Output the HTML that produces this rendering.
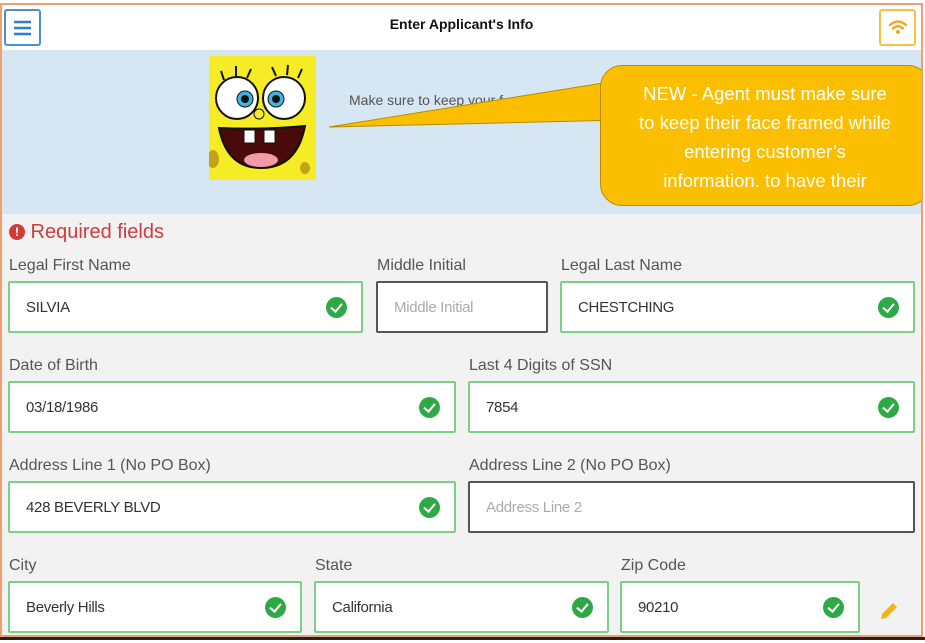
<!DOCTYPE html>
<html><head><meta charset="utf-8"><style>
*{box-sizing:border-box;margin:0;padding:0}
body{width:925px;height:643px;overflow:hidden;background:#fff;font-family:"Liberation Sans",sans-serif;position:relative}
#frame{position:absolute;left:0px;top:3px;width:923px;height:634px;border:2px solid #f0a070;border-bottom:2px solid #e8a070;background:#f2f2f2;overflow:hidden}
#bottomline{position:absolute;left:0;top:637px;width:925px;height:3px;background:#222}
#hdr{position:absolute;left:0;top:0;width:100%;height:45px;background:#fff}
.title{position:absolute;left:0;width:100%;top:11px;text-align:center;font-weight:bold;font-size:14px;color:#111}
.btn{position:absolute;top:4px;width:37px;height:37px;border-radius:3px;background:#fff}
#band{position:absolute;left:0;top:45px;width:100%;height:164px;background:#d6e6f2}
.lbl{position:absolute;font-size:16px;color:#555}
.in{position:absolute;height:52px;background:#fff;border:2px solid #7ccf86;border-radius:2px;font-size:15px;color:#333;padding:16px 0 0 16px;letter-spacing:-0.3px}
.in.e{border-color:#555}
.ph{color:#aaa}
.ck{position:absolute;right:14px;top:14px;width:21px;height:21px;border-radius:50%;background:#2daa46}
.ck:after{content:"";position:absolute;left:7px;top:4px;width:5px;height:9px;border:solid #fff;border-width:0 2px 2px 0;transform:rotate(40deg)}
</style></head><body>
<div id="frame">
<div id="hdr">
 <div class="btn" style="left:2px;border:2px solid #4a90d0"><svg width="33" height="33"><g stroke="#2f7fcf" stroke-width="2.5"><line x1="8" y1="11" x2="25" y2="11"/><line x1="8" y1="17" x2="25" y2="17"/><line x1="8" y1="23" x2="25" y2="23"/></g></svg></div>
 <div class="title">Enter Applicant's Info</div>
 <div class="btn" style="left:877px;border:2px solid #f7c244"><svg width="33" height="33"><g fill="none" stroke="#f2a81d" stroke-width="2.3" stroke-linecap="round"><path d="M9 14 Q17 7 25 14"/><path d="M12 17.5 Q17 13 22 17.5"/></g><circle cx="17" cy="21" r="2" fill="#f2a81d"/></svg></div>
</div>
<div id="band">
 <svg style="position:absolute;left:207px;top:6px" width="107" height="124" viewBox="0 0 107 124">
  <rect width="107" height="124" fill="#f5ec26"/>
  <g stroke="#111" stroke-width="2"><line x1="15" y1="24" x2="12" y2="15"/><line x1="27" y1="20" x2="27" y2="10"/><line x1="38" y1="22" x2="42" y2="13"/><line x1="67" y1="20" x2="63" y2="11"/><line x1="78" y1="19" x2="79" y2="9"/><line x1="89" y1="22" x2="93" y2="13"/></g>
  <circle cx="28" cy="42" r="21" fill="#fff" stroke="#111" stroke-width="2"/><circle cx="75" cy="42" r="21" fill="#fff" stroke="#111" stroke-width="2"/>
  <circle cx="36" cy="43" r="8" fill="#3fb5e0" stroke="#111"/><circle cx="36" cy="43" r="4" fill="#111"/>
  <circle cx="67" cy="43" r="8" fill="#3fb5e0" stroke="#111"/><circle cx="67" cy="43" r="4" fill="#111"/>
  <circle cx="50" cy="58" r="5" fill="#f5ec26" stroke="#111"/>
  <path d="M10 72 Q52 74 96 70 Q88 112 52 112 Q18 112 10 72Z" fill="#4a0a0a" stroke="#111" stroke-width="2"/>
  <rect x="35" y="74" width="11" height="13" fill="#fff" stroke="#111"/><rect x="55" y="74" width="11" height="13" fill="#fff" stroke="#111"/>
  <ellipse cx="52" cy="104" rx="17" ry="7" fill="#f19aa8"/>
  <ellipse cx="4" cy="103" rx="6" ry="9" fill="#c4a21a"/><ellipse cx="96" cy="112" rx="5" ry="6" fill="#c4a21a"/>
 </svg>
 <div style="position:absolute;left:347px;top:42px;font-size:14px;color:#555">Make sure to keep your f</div>
 <svg style="position:absolute;left:320px;top:0" width="300" height="100"><polygon points="7,77 300,30 300,70" fill="#fcbf00" stroke="#b88c00"/></svg>
 <div style="position:absolute;left:598px;top:15px;width:330px;height:141px;background:#fcbf00;border:1.5px solid #b88c00;border-radius:22px;color:#fff;line-height:29px;text-align:center;padding:13px 10px 0 10px;font-family:'Liberation Sans',sans-serif;font-size:18.5px">NEW - Agent must make sure<br>to keep their face framed while<br>entering customer’s<br>information. to have their</div>
</div>
<div style="position:absolute;left:7px;top:216px;font-size:20px;color:#d23b3b"><span style="display:inline-block;width:16px;height:16px;border-radius:50%;background:#d23b3b;color:#fff;font-size:12px;font-weight:bold;text-align:center;line-height:16px;vertical-align:2px">!</span> Required fields</div>

<div class="lbl" style="left:7px;top:252px">Legal First Name</div>
<div class="lbl" style="left:375px;top:252px">Middle Initial</div>
<div class="lbl" style="left:559px;top:252px">Legal Last Name</div>
<div class="in" style="left:6px;top:276px;width:355px">SILVIA<div class="ck"></div></div>
<div class="in e" style="left:374px;top:276px;width:172px"><span class="ph">Middle Initial</span></div>
<div class="in" style="left:558px;top:276px;width:355px">CHESTCHING<div class="ck"></div></div>

<div class="lbl" style="left:7px;top:352px">Date of Birth</div>
<div class="lbl" style="left:467px;top:352px">Last 4 Digits of SSN</div>
<div class="in" style="left:6px;top:376px;width:448px">03/18/1986<div class="ck"></div></div>
<div class="in" style="left:466px;top:376px;width:447px">7854<div class="ck"></div></div>

<div class="lbl" style="left:7px;top:452px">Address Line 1 (No PO Box)</div>
<div class="lbl" style="left:467px;top:452px">Address Line 2 (No PO Box)</div>
<div class="in" style="left:6px;top:476px;width:448px">428 BEVERLY BLVD<div class="ck"></div></div>
<div class="in e" style="left:466px;top:476px;width:447px"><span class="ph">Address Line 2</span></div>

<div class="lbl" style="left:7px;top:552px">City</div>
<div class="lbl" style="left:313px;top:552px">State</div>
<div class="lbl" style="left:619px;top:552px">Zip Code</div>
<div class="in" style="left:6px;top:576px;width:294px">Beverly Hills<div class="ck"></div></div>
<div class="in" style="left:312px;top:576px;width:295px">California<div class="ck"></div></div>
<div class="in" style="left:618px;top:576px;width:240px">90210<div class="ck"></div></div>
<svg style="position:absolute;left:875px;top:594px" width="24" height="24"><path d="M4 20 L5 15 L16 4 L20 8 L9 19Z" fill="#f2b41d"/></svg>
</div>
<div id="bottomline"></div>
</body></html>
